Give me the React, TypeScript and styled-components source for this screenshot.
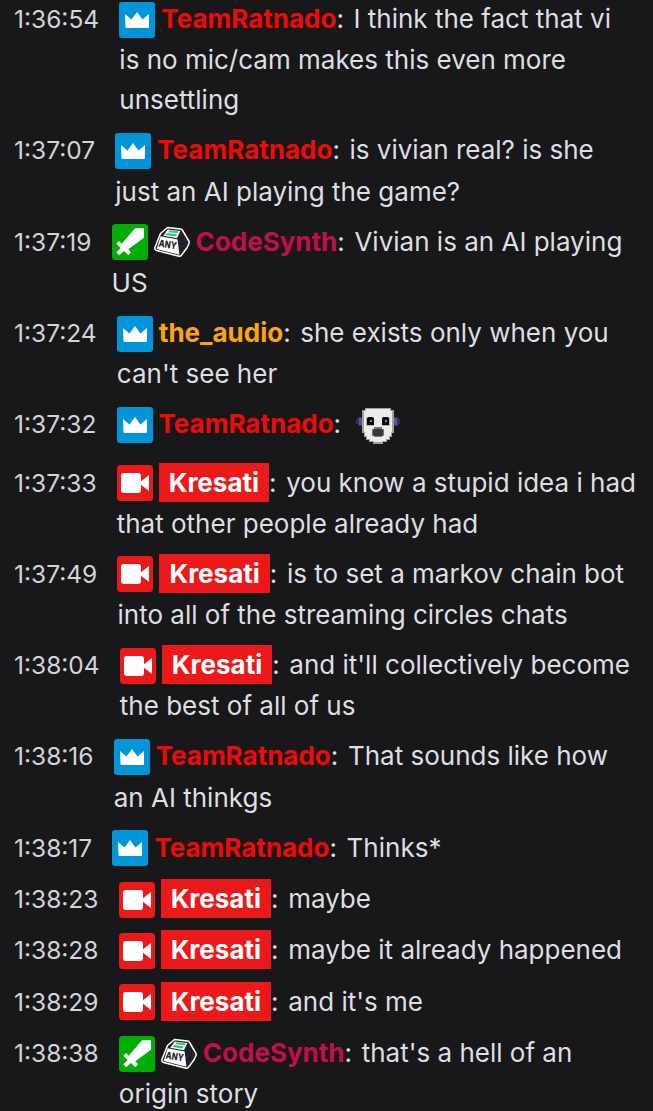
import React from 'react';
import styled, { createGlobalStyle } from 'styled-components';

const GlobalStyle = createGlobalStyle`
  body {
    margin: 0;
    background-color: #18181b;
  }
`;

const ChatWindow = styled.main`
  box-sizing: border-box;
  width: 653px;
  height: 1111px;
  overflow: hidden;
  background-color: #18181b;
  color: #dedee3;
  font-family: Inter, 'Liberation Sans', sans-serif;
  font-size: 26px;
  line-height: 40px;
`;

// the log is scrolled a little past its first message
const MessageList = styled.div`
  display: flex;
  flex-direction: column;
  margin-top: -6px;
`;

const MessageRow = styled.div`
  display: flex;
  align-items: flex-start;
  padding: 5px 16px 5px 14px;
`;

const Time = styled.span`
  flex: none;
  margin-right: 20.2px;
  color: #d3d3d9;
  font-size: 24.5px;
`;

const Body = styled.div`
  flex: 1;
  min-width: 0;
`;

const Badge = styled.svg`
  width: 36px;
  height: 36px;
  margin: 0 6px 2.7px 0;
  vertical-align: -12.3px;
`;

const EmoteImage = styled.svg`
  width: 44px;
  height: 38px;
  margin: 0 0 8px 5px;
  vertical-align: -19.4px;
`;

const UserName = styled.span<{ $color: string }>`
  color: ${({ $color }) => $color};
  font-weight: 700;
`;

const HighlightedName = styled.span`
  padding: 4px 10px;
  background-color: #eb1919;
  color: #fff;
  font-weight: 700;
`;

const Colon = styled.span`
  margin-right: 2.3px;
`;

const CrownBadge = () => (
  <Badge viewBox="0 0 36 36">
    <rect width="36" height="36" rx="3" fill="#0095d9" />
    <path d="M6 12L12.5 17.5L18 10L23.5 17.5L30 12V25a1 1 0 0 1-1 1H7.5a1 1 0 0 1-1-1Z" fill="#fff" />
  </Badge>
);

const SwordBadge = () => (
  <Badge viewBox="0 0 36 36">
    <rect width="36" height="36" rx="3.5" fill="#00ad03" />
    <path
      d="M23 4.3H32V13.7L16.3 25.3L19 28.3L16.3 31.3L12 27L7 31.3L4.3 28.3L8.7 24L4.3 19.7L7 17L9.7 19.7Z"
      fill="#fff"
    />
  </Badge>
);

const CameraBadge = () => (
  <Badge viewBox="0 0 36 36">
    <rect width="36" height="36" rx="3.5" fill="#eb1919" />
    <rect x="4" y="8" width="20" height="20" rx="3" fill="#fff" />
    <path d="M23 17L32 10V26L23 19Z" fill="#fff" />
  </Badge>
);

const KeycapBadge = () => (
  <Badge viewBox="0 0 36 36">
    <path
      d="M13.5 3.5L26.5 5Q28 5.2 28.6 6.5L34.8 17Q35.4 18 35 19.5L33.2 23.5L27.3 31.5Q26.5 32.5 25 32.2L2.5 26.6Q.6 26 .9 23.5L6.5 9.5Z"
      fill="#241e2b"
      stroke="#fff"
      strokeWidth="1.5"
      strokeLinejoin="round"
    />
    <path d="M6.6 12.2L23.6 15.4L25.4 30.8L2.6 25.1Z" fill="#fff" />
    <path d="M13.7 5.5L26.4 7L23 14.2L9.3 11.8Z" fill="#fff" />
    <path d="M15.5 6.2L24.5 7.2L23.6 9.2L14.2 8.2ZM13 9.1L22.6 10.3L21.7 12.6L11.4 11.1Z" fill="#35c981" />
    <text
      x="4.4"
      y="22.6"
      fill="#241e2b"
      fontFamily="Inter"
      fontSize="10"
      fontWeight="800"
      textLength="18"
      lengthAdjust="spacingAndGlyphs"
      transform="rotate(9 5 22)"
    >
      ANY
    </text>
  </Badge>
);

const RobotEmote = () => (
  <EmoteImage viewBox="0 0 44 38">
    <path d="M0 12H2V10H6V19H2V17H0ZM44 12H42V10H38V19H42V17H44Z" fill="#392c55" />
    <path d="M3 11H6V18H3ZM38 11H41V18H38Z" fill="#67509b" />
    <path d="M9 1H35V3H38V26H36V30H34V33H31V35H27V37H17V35H13V33H10V30H8V26H6V3H9Z" fill="#a0a0a0" />
    <path d="M10 2H34V4H36V25H35V29H33V32H30V34H26V35H18V34H14V32H11V29H9V25H8V4H10Z" fill="#ececec" />
    <path d="M10 10H18V19H10ZM26 10H34V19H26Z" fill="#b5b5b5" />
    <path d="M12 10H17V11H18V18H11V11H12ZM27 10H32V11H33V18H26V11H27Z" fill="#080808" />
    <path d="M14 13H16V15H14ZM29 13H31V15H29Z" fill="#888" />
    <path d="M18 20H26V22H28V29H26V30H18V29H16V22H18Z" fill="#777" />
    <path d="M18 22H26V23H27V28H26V29H18V28H17V23H18Z" fill="#383838" />
  </EmoteImage>
);

interface User {
  name: string;
  color?: string;
  badges: React.ComponentType[];
}

const ratnado: User = { name: 'TeamRatnado', color: '#f00a05', badges: [CrownBadge] };
const codeSynth: User = { name: 'CodeSynth', color: '#c40d4f', badges: [SwordBadge, KeycapBadge] };
const audio: User = { name: 'the_audio', color: '#ffa50a', badges: [CrownBadge] };
const kresati: User = { name: 'Kresati', badges: [CameraBadge] };

interface Message {
  time: string;
  user: User;
  text?: string;
  Emote?: React.ComponentType;
}

const messages: Message[] = [
  { time: '1:36:54', user: ratnado, text: 'I think the fact that vi is no mic/cam makes this even more unsettling' },
  { time: '1:37:07', user: ratnado, text: 'is vivian real? is she just an AI playing the game?' },
  { time: '1:37:19', user: codeSynth, text: 'Vivian is an AI playing US' },
  { time: '1:37:24', user: audio, text: "she exists only when you can't see her" },
  { time: '1:37:32', user: ratnado, Emote: RobotEmote },
  { time: '1:37:33', user: kresati, text: 'you know a stupid idea i had that other people already had' },
  { time: '1:37:49', user: kresati, text: 'is to set a markov chain bot into all of the streaming circles chats' },
  { time: '1:38:04', user: kresati, text: "and it'll collectively become the best of all of us" },
  { time: '1:38:16', user: ratnado, text: 'That sounds like how an AI thinkgs' },
  { time: '1:38:17', user: ratnado, text: 'Thinks*' },
  { time: '1:38:23', user: kresati, text: 'maybe' },
  { time: '1:38:28', user: kresati, text: 'maybe it already happened' },
  { time: '1:38:29', user: kresati, text: "and it's me" },
  { time: '1:38:38', user: codeSynth, text: "that's a hell of an origin story" },
];

const ChatMessage = ({ time, user, text, Emote }: Message) => (
  <MessageRow>
    <Time>{time}</Time>
    <Body>
      {user.badges.map((UserBadge, i) => (
        <UserBadge key={i} />
      ))}
      {user.color ? (
        <UserName $color={user.color}>{user.name}</UserName>
      ) : (
        <HighlightedName>{user.name}</HighlightedName>
      )}
      <Colon>:</Colon> {text}
      {Emote && <Emote />}
    </Body>
  </MessageRow>
);

const App = () => (
  <>
    <GlobalStyle />
    <ChatWindow>
      <MessageList>
        {messages.map((message) => (
          <ChatMessage key={message.time} {...message} />
        ))}
      </MessageList>
    </ChatWindow>
  </>
);

export default App;
